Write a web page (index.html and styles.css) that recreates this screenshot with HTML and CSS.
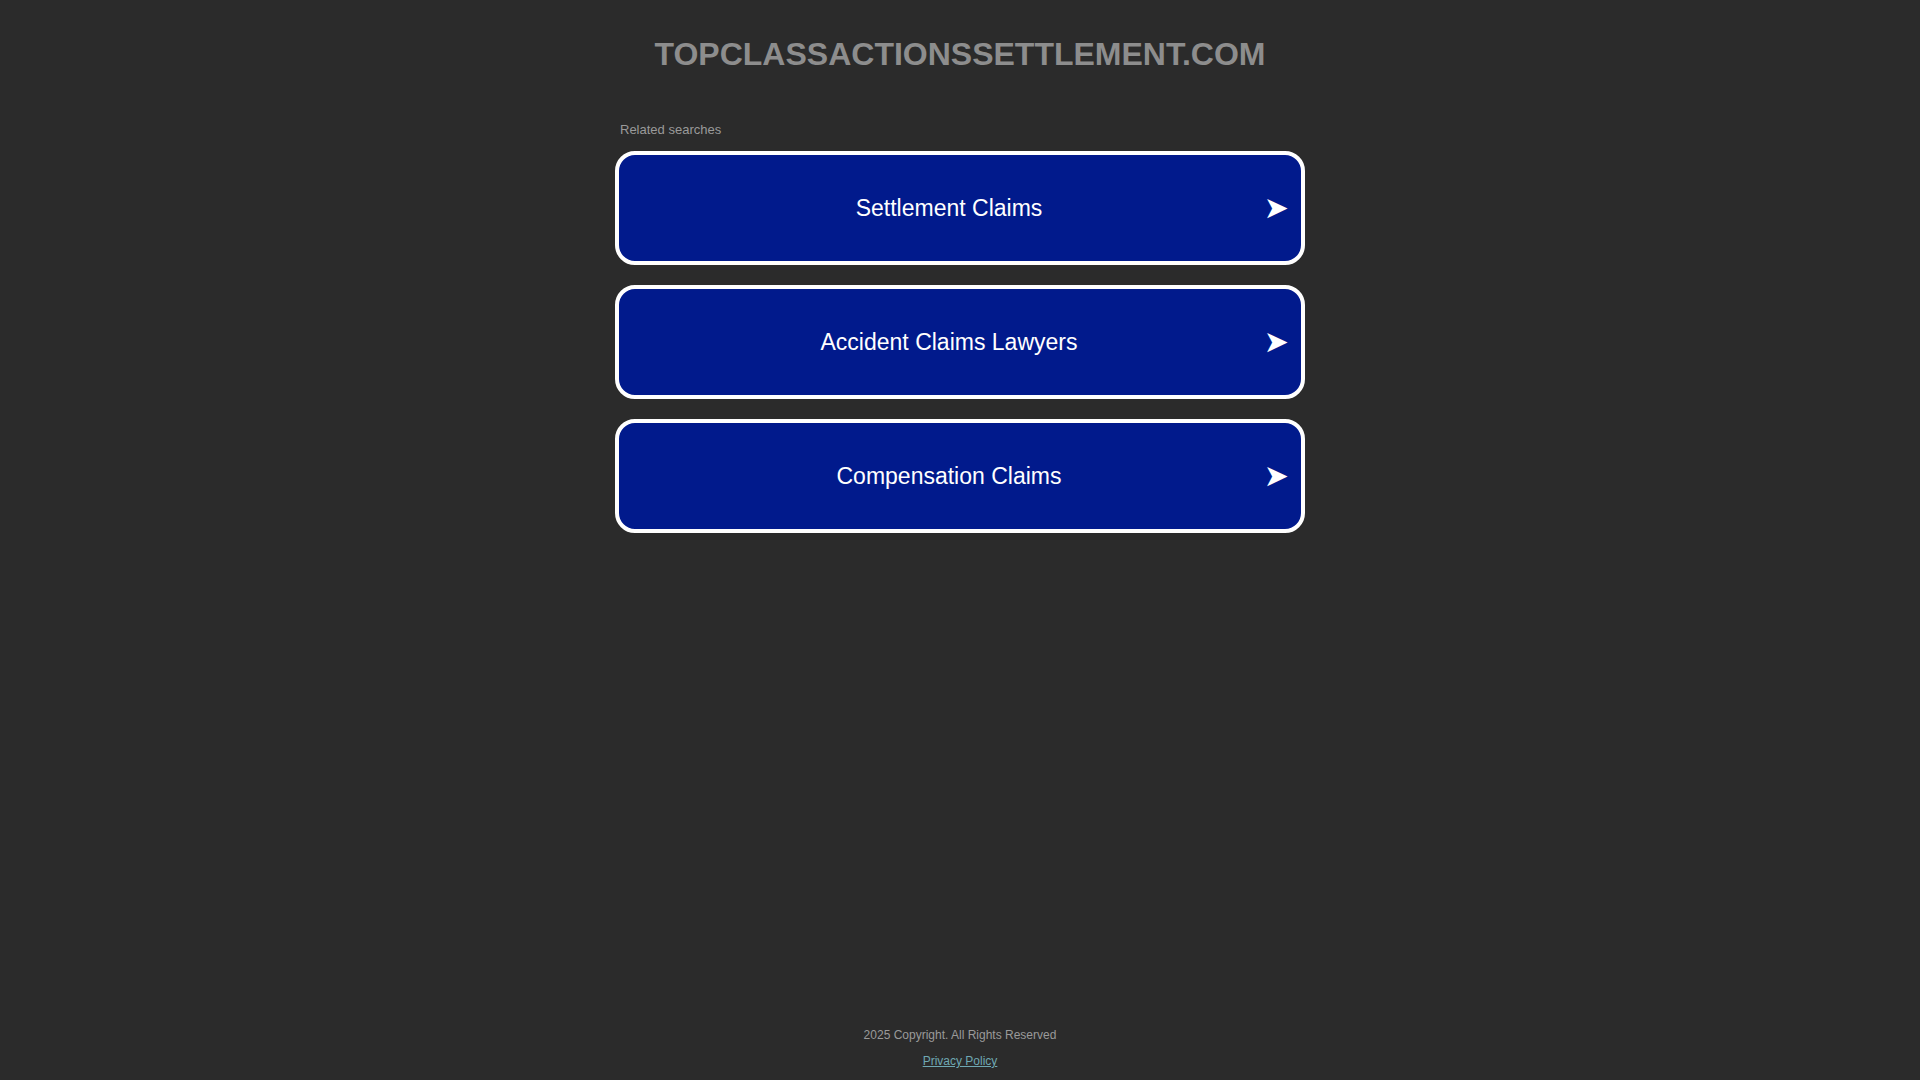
FILE: index.html
```html
<!DOCTYPE html>
<html>
<head>
<meta charset="utf-8">
<link rel="stylesheet" href="styles.css">
</head>
<body>
<div class="page">
  <header class="header">
    <h1 class="domain">TOPCLASSACTIONSSETTLEMENT.COM</h1>
  </header>
  <main class="content">
    <div class="related">Related searches</div>
    <div class="links">
      <a class="link" href="#"><span class="label">Settlement Claims</span><span class="arrow">➤</span></a>
      <a class="link" href="#"><span class="label">Accident Claims Lawyers</span><span class="arrow">➤</span></a>
      <a class="link" href="#"><span class="label">Compensation Claims</span><span class="arrow">➤</span></a>
    </div>
  </main>
  <footer class="footer">
    <div class="copy">2025 Copyright. All Rights Reserved</div>
    <a class="privacy" href="#">Privacy Policy</a>
  </footer>
</div>
</body>
</html>
```
FILE: styles.css
```css
html, body {
  margin: 0;
  padding: 0;
  background: #2b2b2b;
  font-family: "Liberation Sans", Arial, sans-serif;
}
.page {
  min-height: 100vh;
  display: flex;
  flex-direction: column;
  align-items: center;
}
.header {
  padding-top: 34px;
}
.domain {
  margin: 0;
  font-size: 32px;
  line-height: 40px;
  font-weight: bold;
  color: #8d8d8d;
  text-align: center;
}
.content {
  width: 690px;
  margin-top: 48px;
}
.related {
  font-size: 13px;
  line-height: 16px;
  color: #9a9a9a;
  padding-left: 5px;
  margin-bottom: 13px;
}
.links {
  display: flex;
  flex-direction: column;
  gap: 20px;
}
.link {
  display: flex;
  align-items: center;
  height: 114px;
  box-sizing: border-box;
  border: 4px solid #ffffff;
  border-radius: 20px;
  background: #011a8c;
  color: #ffffff;
  text-decoration: none;
  position: relative;
}
.label {
  flex: 1;
  text-align: center;
  font-size: 23px;
  padding-right: 22px;
  padding-top: 1px;
}
.arrow {
  position: absolute;
  right: 12px;
  top: 50%;
  transform: translateY(-50%);
  font-family: "DejaVu Sans", sans-serif;
  font-size: 30px;
  line-height: 30px;
}
.footer {
  margin-top: auto;
  padding-bottom: 11px;
  text-align: center;
}
.copy {
  font-size: 12px;
  line-height: 16px;
  color: #9a9a9a;
  margin-bottom: 8px;
}
.privacy {
  font-size: 12px;
  line-height: 16px;
  color: #6fa8b3;
}
```
